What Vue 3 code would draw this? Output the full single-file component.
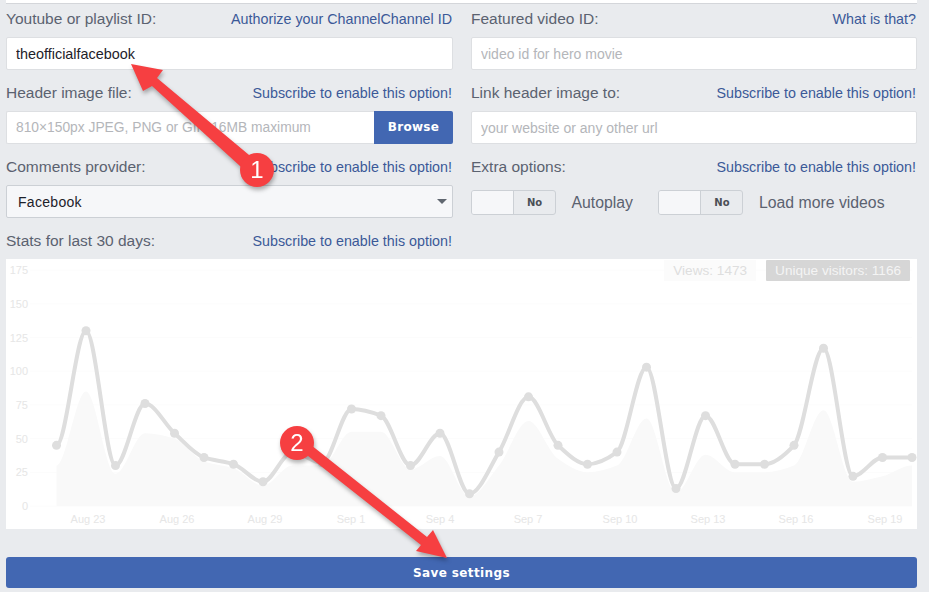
<!-- Channel settings form with stats chart and two callout arrows -->
<template>
  <div class="page">
    <div class="top-strip"></div>

    <div class="form-grid">
      <div class="field">
        <div class="field-head">
          <label class="field-label">Youtube or playlist ID:</label>
          <a class="field-link">Authorize your ChannelChannel ID</a>
        </div>
        <input class="text-input text-input--filled" type="text" value="theofficialfacebook" />
      </div>

      <div class="field">
        <div class="field-head">
          <label class="field-label">Featured video ID:</label>
          <a class="field-link">What is that?</a>
        </div>
        <input class="text-input" type="text" placeholder="video id for hero movie" />
      </div>

      <div class="field">
        <div class="field-head">
          <label class="field-label">Header image file:</label>
          <a class="field-link">{{ subscribeText }}</a>
        </div>
        <div class="file-row">
          <input class="text-input file-input" type="text" placeholder="810×150px JPEG, PNG or GIF, 16MB maximum" />
          <button class="browse-btn" type="button">Browse</button>
        </div>
      </div>

      <div class="field">
        <div class="field-head">
          <label class="field-label">Link header image to:</label>
          <a class="field-link">{{ subscribeText }}</a>
        </div>
        <input class="text-input" type="text" placeholder="your website or any other url" />
      </div>

      <div class="field">
        <div class="field-head">
          <label class="field-label">Comments provider:</label>
          <a class="field-link">{{ subscribeText }}</a>
        </div>
        <div class="select-box">
          <span>Facebook</span>
          <i class="select-caret"></i>
        </div>
      </div>

      <div class="field">
        <div class="field-head">
          <label class="field-label">Extra options:</label>
          <a class="field-link">{{ subscribeText }}</a>
        </div>
        <div class="options-row">
          <template v-for="opt in extraOptions" :key="opt">
            <div class="toggle">
              <span class="toggle-knob"></span>
              <span class="toggle-state">No</span>
            </div>
            <span class="option-label">{{ opt }}</span>
          </template>
        </div>
      </div>

      <div class="field-head stats-head">
        <label class="field-label">Stats for last 30 days:</label>
        <a class="field-link">{{ subscribeText }}</a>
      </div>
    </div>

    <div class="chart-wrap">
      <svg class="chart" viewBox="0 0 911 270" width="911" height="270">
        <line
          v-for="tick in yTicks"
          :key="'g' + tick"
          class="grid-line"
          x1="24"
          x2="906"
          :y1="toY(tick)"
          :y2="toY(tick)"
        />
        <text
          v-for="tick in yTicks"
          :key="'y' + tick"
          class="axis-text"
          x="22"
          text-anchor="end"
          :y="toY(tick) + 4"
        >{{ tick }}</text>
        <text
          v-for="lbl in xLabels"
          :key="lbl.text"
          class="axis-text"
          text-anchor="middle"
          :x="lbl.x"
          y="264"
        >{{ lbl.text }}</text>

        <path class="area" :d="areaPath" />
        <path class="line" :d="linePath" />
        <circle
          v-for="(v, i) in views"
          :key="i"
          class="dot"
          :cx="toX(i)"
          :cy="toY(v)"
          r="4.5"
        />
      </svg>

      <div class="legend">
        <span class="legend-item">Views: 1473</span>
        <span class="legend-item legend-item--active">Unique visitors: 1166</span>
      </div>
    </div>

    <button class="save-btn" type="button">Save settings</button>

    <!-- Screenshot callouts -->
    <svg class="callouts" viewBox="0 0 929 592" width="929" height="592">
      <polygon points="131,64 163,70 157,78 261,165 251,176 152,86 143,91" />
      <circle cx="257" cy="170" r="17" />
      <text x="257" y="178" text-anchor="middle">1</text>
      <polygon points="311,445 427,537 433,530 447,558 416,551 421,545 303,452" />
      <circle cx="297" cy="443" r="17" />
      <text x="297" y="451" text-anchor="middle">2</text>
    </svg>
  </div>
</template>

<script setup>
import { computed } from 'vue'

const subscribeText = 'Subscribe to enable this option!'
const extraOptions = ['Autoplay', 'Load more videos']

const yTicks = [0, 25, 50, 75, 100, 125, 150, 175]

const xLabels = [
  { text: 'Aug 23', x: 82 },
  { text: 'Aug 26', x: 171 },
  { text: 'Aug 29', x: 259 },
  { text: 'Sep 1', x: 345 },
  { text: 'Sep 4', x: 434 },
  { text: 'Sep 7', x: 522 },
  { text: 'Sep 10', x: 614 },
  { text: 'Sep 13', x: 702 },
  { text: 'Sep 16', x: 790 },
  { text: 'Sep 19', x: 879 }
]

const views = [
  45, 130, 30, 76, 54, 36, 31, 18, 40, 32,
  72, 67, 30, 54, 9, 40, 81, 45, 31, 40,
  103, 13, 67, 31, 31, 45, 117, 22, 36, 36
]

const visitors = [
  30, 85, 24, 54, 50, 33, 28, 15, 30, 30,
  55, 55, 27, 37, 7, 30, 63, 35, 25, 30,
  65, 10, 38, 25, 25, 30, 71, 18, 22, 30
]

const toX = i => 50.5 + i * 29.5
const toY = v => 247 - v * 1.348

// Monotone curve: flat tangent on peaks and valleys, so nothing overshoots
function smooth(values) {
  const pts = values.map((v, i) => [toX(i), toY(v)])
  const dx = 29.5
  const slopes = pts.map((p, i) => {
    if (i === 0 || i === pts.length - 1) return 0
    const a = (p[1] - pts[i - 1][1]) / dx
    const b = (pts[i + 1][1] - p[1]) / dx
    if (a * b <= 0) return 0
    return (2 * a * b) / (a + b)
  })
  let d = `M${pts[0][0]},${pts[0][1]}`
  for (let i = 0; i < pts.length - 1; i++) {
    const [x1, y1] = pts[i]
    const [x2, y2] = pts[i + 1]
    d += ` C${x1 + dx / 3},${y1 + (slopes[i] * dx) / 3} ${x2 - dx / 3},${y2 - (slopes[i + 1] * dx) / 3} ${x2},${y2}`
  }
  return d
}

const linePath = computed(() => smooth(views))
const areaPath = computed(() => {
  const last = visitors.length - 1
  return `${smooth(visitors)} L${toX(last)},${toY(0)} L${toX(0)},${toY(0)} Z`
})
</script>

<style>
html,
body {
  margin: 0;
  background: #e9ebee;
}
</style>

<style scoped>
.page {
  position: relative;
  width: 929px;
  height: 592px;
  overflow: hidden;
  background: #e9ebee;
  font-family: "Liberation Sans", Arial, sans-serif;
}

.top-strip {
  height: 3px;
  background: #fff;
  border-bottom: 1px solid #d4d6da;
  margin: 0 12px 0 6px;
}

/* Form */
.form-grid {
  display: grid;
  grid-template-columns: 447px 446px;
  column-gap: 18px;
  row-gap: 8px;
  padding-left: 6px;
}

.field-head {
  display: flex;
  justify-content: space-between;
  align-items: center;
  height: 33px;
  padding: 0 1px 3px 0;
  box-sizing: border-box;
}

.stats-head {
  grid-column: 1;
}

.field-label {
  font-size: 15.5px;
  color: #5b6270;
}

.field-link {
  font-size: 14.3px;
  color: #3b5998;
}

.text-input {
  display: block;
  width: 100%;
  height: 33px;
  box-sizing: border-box;
  padding: 0 9px;
  background: #fff;
  border: 1px solid #dddfe2;
  border-radius: 2px;
  outline: none;
  font-family: inherit;
  font-size: 14px;
  color: #1d2129;
}

.text-input--filled {
  font-size: 14.4px;
}

.text-input::placeholder {
  color: #b4b6ba;
  opacity: 1;
}

.file-row {
  display: flex;
}

.file-input {
  flex: 1;
  min-width: 0;
  border-right: none;
  border-radius: 2px 0 0 2px;
  font-size: 13.8px;
}

.browse-btn {
  width: 79px;
  height: 33px;
  padding: 0 0 2px;
  background: #4267b2;
  border: none;
  border-radius: 0 2px 2px 0;
  font-family: "DejaVu Sans", sans-serif;
  font-size: 12px;
  font-weight: 700;
  letter-spacing: 0.3px;
  color: #fff;
}

.select-box {
  display: flex;
  align-items: center;
  justify-content: space-between;
  height: 33px;
  box-sizing: border-box;
  padding: 0 5px 0 11px;
  background: #f6f7f9;
  border: 1px solid #ccd0d5;
  border-radius: 2px;
  font-size: 14px;
  letter-spacing: 0.3px;
  color: #1d2129;
}

.select-caret {
  width: 0;
  height: 0;
  border-left: 5px solid transparent;
  border-right: 5px solid transparent;
  border-top: 5px solid #606770;
}

.options-row {
  display: flex;
  align-items: center;
  height: 33px;
  padding-top: 2px;
  box-sizing: border-box;
}

.toggle {
  display: flex;
  width: 85px;
  height: 25px;
  box-sizing: border-box;
  background: #e9ebee;
  border: 1px solid #ccd0d5;
  border-radius: 3px;
  overflow: hidden;
}

.toggle-knob {
  width: 41px;
  background: #f6f7f9;
  border-right: 1px solid #ccd0d5;
}

.toggle-state {
  flex: 1;
  text-align: center;
  line-height: 23px;
  font-family: "DejaVu Sans", sans-serif;
  font-size: 10px;
  font-weight: 700;
  color: #4b4f56;
}

.option-label {
  margin: 0 25.5px 0 15.5px;
  font-size: 15.8px;
  color: #5b6270;
}

/* Chart */
.chart-wrap {
  position: relative;
  width: 911px;
  height: 270px;
  margin-left: 6px;
  background: #fff;
}

.chart {
  display: block;
}

.grid-line {
  stroke: #fcfcfc;
  stroke-width: 1;
}

.axis-text {
  font-size: 11px;
  fill: #e6e6e6;
}

.area {
  fill: #f9f9f9;
}

.line {
  fill: none;
  stroke: #dedede;
  stroke-width: 4;
}

.dot {
  fill: #dedede;
}

.legend {
  position: absolute;
  top: 1px;
  right: 7px;
  display: flex;
  gap: 10px;
}

.legend-item {
  padding: 0 9px;
  line-height: 21px;
  font-size: 13.6px;
  color: #dedede;
  background: #fbfbfb;
}

.legend-item--active {
  color: #f4f4f4;
  background: #d6d6d6;
  border-radius: 1px;
}

/* Save */
.save-btn {
  display: block;
  width: 911px;
  height: 31px;
  margin: 28px 0 0 6px;
  padding: 0;
  background: #4267b2;
  border: none;
  border-radius: 3px;
  font-family: "DejaVu Sans", sans-serif;
  font-size: 12px;
  font-weight: 700;
  letter-spacing: 0.4px;
  color: #fff;
}

/* Callouts */
.callouts {
  position: absolute;
  top: 0;
  left: 0;
  pointer-events: none;
  filter: drop-shadow(1px 3px 2px rgba(0, 0, 0, 0.3));
}

.callouts polygon,
.callouts circle {
  fill: #f63f41;
}

.callouts text {
  font-family: "Liberation Sans", Arial, sans-serif;
  font-size: 24px;
  fill: #fff;
}
</style>
